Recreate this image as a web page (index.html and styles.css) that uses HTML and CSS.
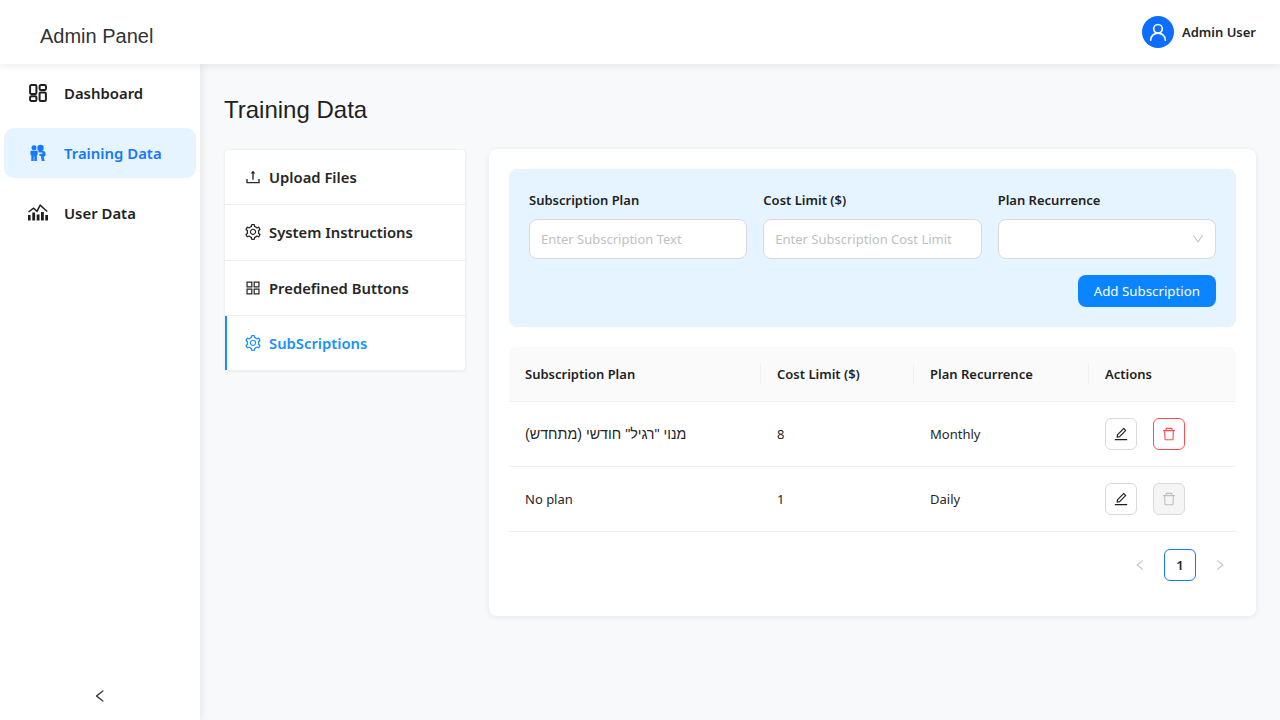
FILE: index.html
```html
<!DOCTYPE html>
<html lang="en">
<head>
    <meta charset="UTF-8">
    <title>Admin Panel</title>
    <link rel="stylesheet" href="styles.css">
</head>
<body>
    <header class="topbar">
        <div class="brand">Admin Panel</div>
        <div class="user">
            <span class="avatar">
                <svg viewBox="0 0 24 24" width="22" height="22" fill="none" stroke="#fff" stroke-width="1.8" stroke-linecap="round"><circle cx="12" cy="8.5" r="4.7"/><path d="M4 21c0-4.6 3.5-7.8 8-7.8s8 3.2 8 7.8"/></svg>
            </span>
            <span class="user-name">Admin User</span>
        </div>
    </header>

    <div class="layout">
        <aside class="sidebar">
            <nav class="side-nav">
                <a class="side-item">
                    <svg class="side-icon" viewBox="0 0 18 18" fill="none" stroke="currentColor" stroke-width="2"><rect x="1.1" y="1.1" width="6.3" height="8.8" rx="1.2"/><rect x="10.6" y="1.1" width="6.3" height="4.8" rx="1.2"/><rect x="1.1" y="12.2" width="6.3" height="4.7" rx="1.2"/><rect x="10.6" y="8.4" width="6.3" height="8.5" rx="1.2"/></svg>
                    Dashboard
                </a>
                <a class="side-item active">
                    <svg class="side-icon" viewBox="0 0 18 18" fill="currentColor"><circle cx="5" cy="3.8" r="2.500"/><circle cx="11.500" cy="4" r="3.200"/><path d="M1.500 6.800h7.200v3.700l-.8 1V17H5.300v-4.500h-.6V17H2.300v-5.500l-.8-1z"/><path d="M9.500 7h4.700c1.500 0 2.300 1 2.300 2.200v1.700c0 1.100-.9 1.700-1.900 1.700l1 4.400h-2.800l-1-5-1.600-.5v-1.400l3.200-.4V8.400l-3.900.2z"/></svg>
                    Training Data
                </a>
                <a class="side-item">
                    <svg class="side-icon wide" viewBox="0 0 20 18" fill="currentColor"><rect x="0" y="11" width="2.600" height="5.500"/><rect x="4.300" y="8.500" width="2.800" height="8"/><rect x="8.700" y="10.500" width="2.800" height="6"/><rect x="13" y="8" width="2.800" height="8.500"/><rect x="17.300" y="11" width="2.700" height="5.500"/><path d="M0.500 8 5.500 4.200l3.500 3 3.200-6 7 6.300" fill="none" stroke="currentColor" stroke-width="1.500"/></svg>
                    User Data
                </a>
            </nav>
            <button class="collapse" type="button">
                <svg class="ant" viewBox="64 64 896 896" width="14" height="14"><path d="M724 218.3V141c0-6.7-7.7-10.4-12.9-6.3L260.3 486.8a31.86 31.86 0 0 0 0 50.3l450.8 352.1c5.3 4.1 12.9.4 12.9-6.3v-77.3c0-4.9-2.3-9.6-6.1-12.6l-360-281 360-281.1c3.8-3 6.1-7.7 6.1-12.6z"/></svg>
            </button>
        </aside>

        <main class="content">
            <h1 class="page-title">Training Data</h1>
            <div class="columns">
                <ul class="tabs">
                    <li class="tab">
                        <svg class="ant" viewBox="64 64 896 896" width="16" height="16"><path d="M400 317.7h73.9V656c0 4.4 3.6 8 8 8h60c4.4 0 8-3.6 8-8V317.7H624c6.7 0 10.4-7.7 6.3-12.9L518.3 163a8 8 0 0 0-12.6 0l-112 141.7c-4.1 5.3-.4 13 6.3 13zM878 626h-60c-4.4 0-8 3.6-8 8v154H214V634c0-4.4-3.6-8-8-8h-60c-4.4 0-8 3.6-8 8v198c0 17.7 14.3 32 32 32h684c17.7 0 32-14.3 32-32V634c0-4.4-3.6-8-8-8z"/></svg>
                        Upload Files
                    </li>
                    <li class="tab">
                        <svg class="ant" viewBox="64 64 896 896" width="16" height="16"><use href="#gear"/></svg>
                        System Instructions
                    </li>
                    <li class="tab">
                        <svg class="ant" viewBox="64 64 896 896" width="16" height="16"><path d="M464 144H160c-8.8 0-16 7.2-16 16v304c0 8.8 7.2 16 16 16h304c8.8 0 16-7.2 16-16V160c0-8.8-7.2-16-16-16zm-52 268H212V212h200v200zm452-268H560c-8.8 0-16 7.2-16 16v304c0 8.8 7.2 16 16 16h304c8.8 0 16-7.2 16-16V160c0-8.8-7.2-16-16-16zm-52 268H612V212h200v200zM464 544H160c-8.8 0-16 7.2-16 16v304c0 8.8 7.2 16 16 16h304c8.8 0 16-7.2 16-16V560c0-8.8-7.2-16-16-16zm-52 268H212V612h200v200zm452-268H560c-8.8 0-16 7.2-16 16v304c0 8.8 7.2 16 16 16h304c8.8 0 16-7.2 16-16V560c0-8.8-7.2-16-16-16zm-52 268H612V612h200v200z"/></svg>
                        Predefined Buttons
                    </li>
                    <li class="tab selected">
                        <svg class="ant" viewBox="64 64 896 896" width="16" height="16"><use href="#gear"/></svg>
                        SubScriptions
                    </li>
                </ul>

                <section class="card">
                    <form class="plan-form">
                        <div class="form-row">
                            <div class="field">
                                <label>Subscription Plan</label>
                                <input type="text" placeholder="Enter Subscription Text">
                            </div>
                            <div class="field">
                                <label>Cost Limit ($)</label>
                                <input type="text" placeholder="Enter Subscription Cost Limit">
                            </div>
                            <div class="field">
                                <label>Plan Recurrence</label>
                                <div class="select">
                                    <svg class="ant" viewBox="64 64 896 896" width="12" height="12"><path d="M884 256h-75c-5.1 0-9.9 2.5-12.9 6.6L512 654.2 227.9 262.6c-3-4.1-7.8-6.6-12.9-6.6h-75c-6.5 0-10.3 7.4-6.5 12.7l352.6 486.1c12.8 17.6 39 17.6 51.7 0l352.6-486.1c3.9-5.3.1-12.7-6.4-12.7z"/></svg>
                                </div>
                            </div>
                        </div>
                        <div class="form-actions">
                            <button class="btn-primary" type="button">Add Subscription</button>
                        </div>
                    </form>

                    <table class="plans">
                        <thead>
                            <tr>
                                <th class="col-plan">Subscription Plan</th>
                                <th class="col-cost">Cost Limit ($)</th>
                                <th class="col-rec">Plan Recurrence</th>
                                <th>Actions</th>
                            </tr>
                        </thead>
                        <tbody>
                            <tr>
                                <td class="hebrew">מנוי "רגיל" חודשי (מתחדש)</td>
                                <td>8</td>
                                <td>Monthly</td>
                                <td>
                                    <div class="actions">
                                        <button class="icon-btn" type="button"><svg class="ant" viewBox="64 64 896 896" width="14" height="14"><use href="#edit"/></svg></button>
                                        <button class="icon-btn danger" type="button"><svg class="ant" viewBox="64 64 896 896" width="14" height="14"><use href="#trash"/></svg></button>
                                    </div>
                                </td>
                            </tr>
                            <tr>
                                <td>No plan</td>
                                <td>1</td>
                                <td>Daily</td>
                                <td>
                                    <div class="actions">
                                        <button class="icon-btn" type="button"><svg class="ant" viewBox="64 64 896 896" width="14" height="14"><use href="#edit"/></svg></button>
                                        <button class="icon-btn disabled" type="button"><svg class="ant" viewBox="64 64 896 896" width="14" height="14"><use href="#trash"/></svg></button>
                                    </div>
                                </td>
                            </tr>
                        </tbody>
                    </table>

                    <div class="pager">
                        <svg class="ant" viewBox="64 64 896 896" width="12" height="12"><path d="M724 218.3V141c0-6.7-7.7-10.4-12.9-6.3L260.3 486.8a31.86 31.86 0 0 0 0 50.3l450.8 352.1c5.3 4.1 12.9.4 12.9-6.3v-77.3c0-4.9-2.3-9.6-6.1-12.6l-360-281 360-281.1c3.8-3 6.1-7.7 6.1-12.6z"/></svg>
                        <span class="page-num">1</span>
                        <svg class="ant" viewBox="64 64 896 896" width="12" height="12"><path d="M765.7 486.8L314.9 134.7A7.97 7.97 0 0 0 302 141v77.3c0 4.9 2.3 9.6 6.1 12.6l360 281.1-360 281.1c-3.9 3-6.1 7.7-6.1 12.6V883c0 6.7 7.7 10.4 12.9 6.3l450.8-352.1a31.96 31.96 0 0 0 0-50.4z"/></svg>
                    </div>
                </section>
            </div>
        </main>
    </div>

    <svg class="defs" width="0" height="0">
        <defs>
            <path id="gear" d="M924.8 625.7l-65.5-56c3.1-19 4.7-38.4 4.7-57.8s-1.6-38.8-4.7-57.8l65.5-56a32.03 32.03 0 0 0 9.3-35.2l-.9-2.6a443.74 443.74 0 0 0-79.7-137.9l-1.8-2.1a32.12 32.12 0 0 0-35.1-9.5l-81.3 28.9c-30-24.6-63.5-44-99.7-57.6l-15.7-85a32.05 32.05 0 0 0-25.8-25.7l-2.7-.5c-52.1-9.4-106.9-9.4-159 0l-2.7.5a32.05 32.05 0 0 0-25.8 25.7l-15.8 85.4a351.86 351.86 0 0 0-99 57.4l-81.9-29.1a32 32 0 0 0-35.1 9.5l-1.8 2.1a446.02 446.02 0 0 0-79.7 137.9l-.9 2.6c-4.5 12.5-.8 26.5 9.3 35.2l66.3 56.6c-3.1 18.8-4.6 38-4.6 57.1 0 19.2 1.5 38.4 4.6 57.1L99 625.5a32.03 32.03 0 0 0-9.3 35.2l.9 2.6c18.1 50.4 44.9 96.9 79.7 137.9l1.8 2.1a32.12 32.12 0 0 0 35.1 9.5l81.9-29.1c29.8 24.5 63.1 43.9 99 57.4l15.8 85.4a32.05 32.05 0 0 0 25.8 25.7l2.7.5a449.4 449.4 0 0 0 159 0l2.7-.5a32.05 32.05 0 0 0 25.8-25.7l15.7-85a350 350 0 0 0 99.7-57.6l81.3 28.9a32 32 0 0 0 35.1-9.5l1.8-2.1c34.8-41.1 61.6-87.5 79.7-137.9l.9-2.6c4.5-12.3.8-26.3-9.3-35zM788.3 465.9c2.5 15.1 3.8 30.6 3.8 46.1s-1.3 31-3.8 46.1l-6.6 40.1 74.7 63.9a370.03 370.03 0 0 1-42.6 73.6L721 702.8l-31.4 25.8c-23.9 19.6-50.5 35-79.3 45.8l-38.1 14.3-17.9 97a377.5 377.5 0 0 1-85 0l-17.9-97.2-37.8-14.5c-28.5-10.8-55-26.2-78.7-45.7l-31.4-25.9-93.4 33.2c-17-22.9-31.2-47.6-42.6-73.6l75.5-64.5-6.5-40c-2.4-14.9-3.7-30.3-3.7-45.5 0-15.3 1.2-30.6 3.7-45.5l6.5-40-75.5-64.5c11.3-26.1 25.6-50.7 42.6-73.6l93.4 33.2 31.4-25.9c23.7-19.5 50.2-34.9 78.7-45.7l37.9-14.3 17.9-97.2c28.1-3.2 56.8-3.2 85 0l17.9 97 38.1 14.3c28.7 10.8 55.4 26.2 79.3 45.8l31.4 25.8 92.8-32.9c17 22.9 31.2 47.6 42.6 73.6L781.8 426l6.5 39.9zM512 326c-97.2 0-176 78.8-176 176s78.8 176 176 176 176-78.8 176-176-78.8-176-176-176zm79.2 255.2A111.6 111.6 0 0 1 512 614c-29.9 0-58-11.7-79.2-32.8A111.6 111.6 0 0 1 400 502c0-29.9 11.7-58 32.8-79.2C454 401.6 482.1 390 512 390c29.9 0 58 11.6 79.2 32.8A111.6 111.6 0 0 1 624 502c0 29.9-11.7 58-32.8 79.2z"/>
            <path id="edit" d="M257.7 752c2 0 4-.2 6-.5L431.9 722c2-.4 3.9-1.3 5.3-2.8l423.9-423.9a9.96 9.96 0 0 0 0-14.1L694.9 114.9c-1.9-1.9-4.4-2.9-7.1-2.9s-5.2 1-7.1 2.9L256.8 538.8c-1.5 1.5-2.4 3.3-2.8 5.3l-29.5 168.2a33.5 33.5 0 0 0 9.4 29.8c6.6 6.4 14.9 9.9 23.8 9.9zm67.4-174.4L687.8 215l73.3 73.3-362.7 362.6-88.9 15.7 15.6-89zM880 836H144c-17.7 0-32 14.3-32 32v36c0 4.4 3.6 8 8 8h784c4.4 0 8-3.6 8-8v-36c0-17.7-14.3-32-32-32z"/>
            <path id="trash" d="M360 184h-8c4.4 0 8-3.6 8-8v8h304v-8c0 4.4 3.6 8 8 8h-8v72h72v-80c0-35.3-28.7-64-64-64H352c-35.3 0-64 28.7-64 64v80h72v-72zm504 72H160c-17.7 0-32 14.3-32 32v32c0 4.4 3.6 8 8 8h60.4l24.7 523c1.6 34.1 29.8 61 63.9 61h454c34.2 0 62.3-26.8 63.9-61l24.7-523H888c4.4 0 8-3.6 8-8v-32c0-17.7-14.3-32-32-32zM731.3 840H292.7l-24.2-512h487l-24.2 512z"/>
        </defs>
    </svg>
</body>
</html>
```

FILE: styles.css
```css
* {
    box-sizing: border-box;
}
body {
    margin: 0;
    height: 720px;
    overflow: hidden;
    background-color: #f8f9fb;
    color: #1f1f1f;
    font-family: "Noto Sans", "Open Sans", sans-serif;
    font-size: 14px;
}
.ant {
    fill: currentColor;
    display: block;
    flex: none;
}
.defs {
    position: absolute;
}

/* header */
.topbar {
    position: relative;
    z-index: 2;
    display: flex;
    align-items: center;
    justify-content: space-between;
    height: 64px;
    padding: 0 24px 0 40px;
    background: #fff;
    box-shadow: 0 2px 8px rgba(0, 0, 0, 0.08);
}
.brand {
    font-family: "Liberation Sans", Arial, sans-serif;
    font-size: 20px;
    color: #333;
    padding-top: 8px;
}
.user {
    display: flex;
    align-items: center;
    gap: 8px;
}
.avatar {
    display: flex;
    align-items: center;
    justify-content: center;
    width: 32px;
    height: 32px;
    border-radius: 50%;
    background: #0d6efd;
}
.user-name {
    font-size: 13px;
    font-weight: 600;
    color: #262626;
}

/* sidebar */
.layout {
    display: flex;
    height: 656px;
}
.sidebar {
    position: relative;
    z-index: 1;
    display: flex;
    flex-direction: column;
    justify-content: space-between;
    width: 200px;
    padding: 4px;
    background: #fff;
    box-shadow: 2px 0 8px rgba(0, 0, 0, 0.08);
}
.side-nav {
    display: flex;
    flex-direction: column;
    gap: 10px;
}
.side-item {
    display: flex;
    align-items: center;
    gap: 17px;
    height: 50px;
    padding-left: 25px;
    border-radius: 10px;
    font-size: 14.9px;
    font-weight: 600;
    color: #1f1f1f;
}
.side-item.active {
    background: #e6f4ff;
    color: #1677ff;
}
.side-icon {
    width: 18px;
    height: 18px;
    flex: none;
}
.side-icon.wide {
    width: 20px;
    margin-left: -1px;
    margin-right: -1px;
}
.collapse {
    display: flex;
    justify-content: center;
    align-items: center;
    height: 40px;
    margin-bottom: 0;
    padding: 0;
    border: none;
    background: none;
    color: #333;
}

/* main */
.content {
    flex: 1;
    padding: 28px 24px 0;
}
.page-title {
    margin: 0 0 21px;
    font-family: "Liberation Sans", Arial, sans-serif;
    font-size: 24px;
    font-weight: 400;
    line-height: 36px;
    color: #1f1f1f;
}
.columns {
    display: flex;
    align-items: flex-start;
    gap: 23px;
}

/* tabs */
.tabs {
    width: 242px;
    margin: 0;
    padding: 0;
    list-style: none;
    background: #fff;
    border: 1px solid #f0f0f0;
    border-radius: 4px;
    box-shadow: 0 1px 2px rgba(0, 0, 0, 0.06);
}
.tab {
    display: flex;
    align-items: center;
    gap: 8px;
    height: 55.33px;
    padding-left: 20px;
    border-bottom: 1px solid #ededed;
    font-size: 14.8px;
    font-weight: 600;
    color: #262626;
}
.tab:last-child {
    height: 54.33px;
    border-bottom: none;
}
.tab.selected {
    border-left: 2px solid #1890ff;
    padding-left: 18px;
    color: #1890ff;
}

/* right card */
.card {
    flex: 1;
    height: 467px;
    padding: 20px;
    background: #fff;
    border-radius: 8px;
    box-shadow: 0 1px 6px rgba(0, 0, 0, 0.08);
}
.plan-form {
    height: 158px;
    padding: 20px;
    background: #e6f4ff;
    border-radius: 8px;
}
.form-row {
    display: grid;
    grid-template-columns: repeat(3, 1fr);
    gap: 16px;
}
.field label {
    display: block;
    margin-bottom: 8px;
    font-size: 13px;
    font-weight: 600;
    line-height: 22px;
    color: #1f1f1f;
}
.field input, .select {
    display: block;
    width: 100%;
    height: 40px;
    padding: 0 11px;
    background: #fff;
    border: 1px solid #d9d9d9;
    border-radius: 8px;
    font: inherit;
    font-size: 13px;
}
.field input::placeholder {
    color: #bfbfbf;
}
.select {
    display: flex;
    align-items: center;
    justify-content: flex-end;
    color: #bfbfbf;
}
.form-actions {
    display: flex;
    justify-content: flex-end;
    margin-top: 16px;
}
.btn-primary {
    height: 32px;
    padding: 0 16px;
    background: #0a84ff;
    border: none;
    border-radius: 8px;
    color: #fff;
    font: inherit;
    font-size: 13.3px;
}

/* table */
.plans {
    width: 100%;
    margin-top: 20px;
    border-collapse: collapse;
    table-layout: fixed;
    font-size: 13px;
}
.plans th {
    position: relative;
    height: 54px;
    padding: 0 16px;
    background: #fafafa;
    border-bottom: 1px solid #f0f0f0;
    font-weight: 600;
    text-align: left;
}
.plans th:first-child {
    border-top-left-radius: 8px;
}
.plans th:last-child {
    border-top-right-radius: 8px;
}
.plans th:not(:last-child)::after {
    content: "";
    position: absolute;
    top: 16px;
    right: 0;
    width: 1px;
    height: 22px;
    background: #f0f0f0;
}
.col-plan {
    width: 252px;
}
.col-cost {
    width: 153px;
}
.col-rec {
    width: 175px;
}
.plans td {
    height: 65px;
    padding: 0 16px;
    border-bottom: 1px solid #f0f0f0;
    color: #262626;
}
.plans td.hebrew {
    font-family: "Liberation Sans", Arial, sans-serif;
    font-size: 14.3px;
}
.actions {
    display: flex;
    gap: 16px;
}
.icon-btn {
    display: flex;
    align-items: center;
    justify-content: center;
    width: 32px;
    height: 32px;
    padding: 0;
    background: #fff;
    border: 1px solid #d9d9d9;
    border-radius: 6px;
    color: #1f1f1f;
}
.icon-btn.danger {
    border-color: #ff4d4f;
    color: #ff4d4f;
}
.icon-btn.disabled {
    background: #f5f5f5;
    color: #bfbfbf;
}

/* pagination */
.pager {
    display: flex;
    align-items: center;
    justify-content: flex-end;
    gap: 18px;
    margin-top: 17px;
    padding-right: 10px;
    color: #bfbfbf;
}
.page-num {
    display: flex;
    align-items: center;
    justify-content: center;
    width: 32px;
    height: 32px;
    border: 1px solid #1677ff;
    border-radius: 6px;
    color: #262626;
    font-size: 13px;
    font-weight: 600;
}
```
